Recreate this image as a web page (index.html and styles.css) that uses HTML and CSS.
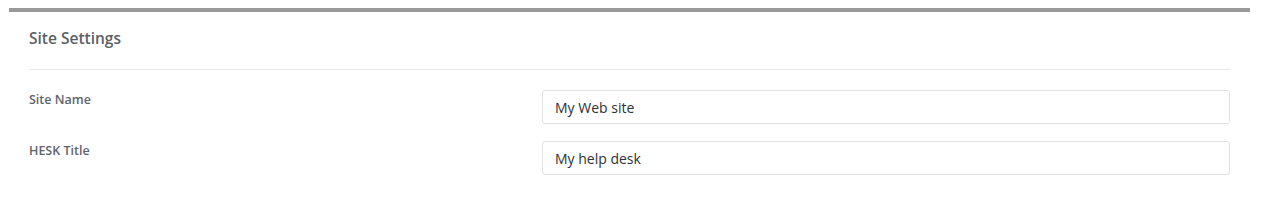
FILE: index.html
```html
<!DOCTYPE html>
<html lang="en">
<head>
  <meta charset="UTF-8" />
  <title>Site Settings</title>
  <link rel="stylesheet" href="styles.css">
</head>
<body>

  <div class="settings-box">
    <h3 class="box-title">Site Settings</h3>
    <div class="form-row">
      <label class="form-label" for="site_title">Site Name</label>
      <input class="form-input" id="site_title" type="text" value="My Web site">
    </div>
    <div class="form-row">
      <label class="form-label" for="hesk_title">HESK Title</label>
      <input class="form-input" id="hesk_title" type="text" value="My help desk">
    </div>
  </div>

</body>
</html>
```

FILE: styles.css
```css
body {
  margin: 0;
  padding: 8px 12px 0 9px;
  background: #fff;
  font-family: 'Open Sans', sans-serif;
  color: #5a5f66;
}
.settings-box {
  border-top: 4px solid #9a9a9a;
  padding: 0 20px 20px 20px;
}
.box-title {
  margin: 0;
  padding: 14px 0 18px 0;
  font-size: 15.5px;
  font-weight: 600;
  line-height: 25px;
  color: #5a5f66;
  border-bottom: 1px solid #e9e9e9;
}
.form-row {
  display: grid;
  grid-template-columns: 513px 1fr;
  margin-top: 17px;
}
.form-row:first-of-type {
  margin-top: 20px;
}
.form-label {
  font-size: 12.5px;
  font-weight: 600;
  line-height: 20px;
  color: #5f646b;
}
.form-input {
  height: 34px;
  box-sizing: border-box;
  border: 1px solid #e2e2e2;
  border-radius: 3px;
  padding: 0 12px;
  font-family: 'Open Sans', sans-serif;
  font-size: 14px;
  color: #2d3136;
  background: #fff;
}
```
